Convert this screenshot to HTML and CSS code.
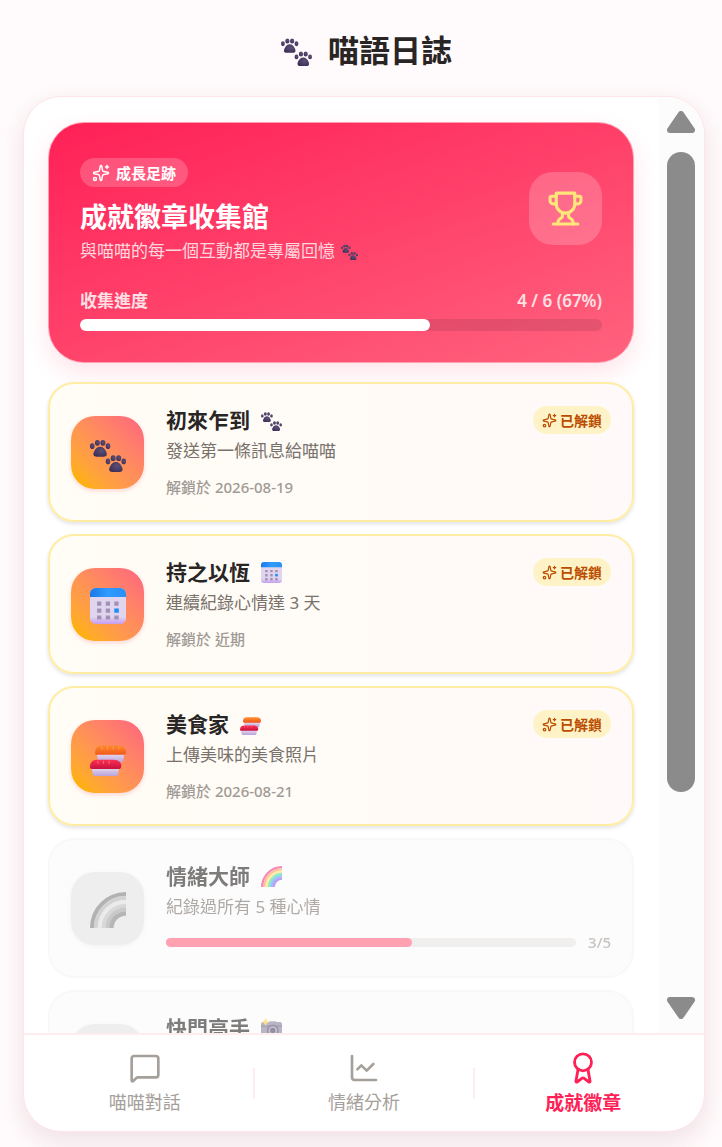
FILE: index.html
```html
<!DOCTYPE html>
<html lang="zh-Hant">
<head>
	<meta charset="utf-8">
	<meta name="viewport" content="width=device-width, initial-scale=1">
	<title>喵語日誌</title>
<link rel="stylesheet" href="styles.css">
</head>
<body>
<svg class="defs" aria-hidden="true">
    <defs>
        <radialGradient id="pawfill" cx="0.6" cy="0.4" r="0.7">
            <stop offset="0" stop-color="#5d5176"/>
            <stop offset="1" stop-color="#3b2c55"/>
        </radialGradient>
        <linearGradient id="caltop" x1="0" y1="0" x2="1" y2="0">
            <stop offset="0" stop-color="#1a78e8"/>
            <stop offset="0.5" stop-color="#2f9bff"/>
            <stop offset="1" stop-color="#2a8ef5"/>
        </linearGradient>
        <linearGradient id="calbody" x1="0" y1="0" x2="0" y2="1">
            <stop offset="0.8" stop-color="#e0d5ee"/>
            <stop offset="1" stop-color="#c79cf0"/>
        </linearGradient>
        <linearGradient id="rice" x1="0" y1="0" x2="0" y2="1">
            <stop offset="0" stop-color="#e6dcee"/>
            <stop offset="1" stop-color="#b9a2dc"/>
        </linearGradient>
        <linearGradient id="salmon" x1="0" y1="0" x2="0" y2="1">
            <stop offset="0" stop-color="#ff8a2a"/>
            <stop offset="1" stop-color="#f2571c"/>
        </linearGradient>
        <linearGradient id="tuna" x1="0" y1="0" x2="0" y2="1">
            <stop offset="0" stop-color="#fb2f52"/>
            <stop offset="1" stop-color="#c9123f"/>
        </linearGradient>
    </defs>
    <symbol id="paw" viewBox="0 0 32 32">
        <g id="onepaw" fill="url(#pawfill)">
            <ellipse cx="2" cy="9" rx="2" ry="2.5"/>
            <ellipse cx="6.6" cy="6.1" rx="2.2" ry="2.6"/>
            <ellipse cx="11.5" cy="6.1" rx="2.2" ry="2.6"/>
            <ellipse cx="16" cy="9" rx="2" ry="2.5"/>
            <path d="M9 9.600c2.600 0 3.800 1.600 4.800 3.200 1.400 2.100 1.400 3.700.7 4.700-.8 1-2.500.9-5.500.9s-4.700.1-5.500-.9c-.7-1-.7-2.600.7-4.700 1-1.600 2.200-3.200 4.800-3.200z"/>
        </g>
        <use href="#onepaw" x="14" y="13.600"/>
    </symbol>
    <symbol id="calendar" viewBox="0 0 32 32">
        <rect width="32" height="32" rx="5" fill="url(#calbody)"/>
        <path d="M0 8V5a5 5 0 0 1 5-5h22a5 5 0 0 1 5 5v3z" fill="url(#caltop)"/>
        <path fill="#a291b5" d="M6.300 12h3.800v3.800H6.300zM14 12h3.800v3.800H14zM21.600 12h3.800v3.800h-3.800zM6.300 18.200h3.800V22H6.300zM14 18.200h3.800V22H14zM6.300 24.400h3.800v3.600H6.300zM14 24.400h3.800v3.600H14zM21.600 24.400h3.800v3.600h-3.800z"/>
        <path fill="#1f8cf5" d="M21.600 18.200h4V22h-4z"/>
    </symbol>
    <symbol id="sushi" viewBox="0 0 32 32">
        <path d="M6 12h24.500l-1 6.500a2 2 0 0 1-2 1.500H9a2 2 0 0 1-2-1.500z" fill="url(#rice)"/>
        <path d="M4.500 11.500C4.500 7 7 5 11 5h14c4.500 0 7 2 7 5.500 0 2-1 2.700-3 2.700H6.500c-1.400 0-2-.5-2-1.700z" fill="url(#salmon)"/>
        <path d="M10.500 6v2.500M15.500 6v2.500M20.500 6v2.500M25.500 6v2.500" stroke="#ff9a50" stroke-width="1" fill="none"/>
        <path d="M1.500 24.500H26L25 30.500a2 2 0 0 1-2 1.500H4.500a2 2 0 0 1-2-1.500z" fill="url(#rice)"/>
        <path d="M0 24c0-4.500 2.500-6.500 6.500-6.500h14c4.500 0 7.300 2 7.300 5.500 0 2-1 2.700-3 2.700H2c-1.400 0-2-.5-2-1.700z" fill="url(#tuna)"/>
        <path d="M7 18.500v2.500M12 18.500v2.500M17 18.500v2.500" stroke="#ff6580" stroke-width="1" fill="none"/>
    </symbol>
    <symbol id="rainbow" viewBox="0 0 32 32">
        <g fill="none">
            <path d="M1.800 32A30.200 30.200 0 0 1 32 1.800" stroke="#f2388f" stroke-width="3.600"/>
            <path d="M5.200 32A26.800 26.800 0 0 1 32 5.200" stroke="#ff9a5c" stroke-width="3.600"/>
            <path d="M8.700 32A23.300 23.300 0 0 1 32 8.700" stroke="#ffe16b" stroke-width="3.800"/>
            <path d="M12.200 32A19.800 19.800 0 0 1 32 12.200" stroke="#4cd9a0" stroke-width="3.600"/>
            <path d="M15.500 32A16.500 16.500 0 0 1 32 15.500" stroke="#4aa5f0" stroke-width="3.400"/>
            <path d="M19 32A13 13 0 0 1 32 19" stroke="#8a5cf0" stroke-width="4"/>
        </g>
    </symbol>
    <symbol id="camera" viewBox="0 0 32 32">
        <path d="M11 8l2-3h10l2 3z" fill="#8d87a0"/>
        <rect y="6" width="32" height="24" rx="3" fill="#8b84a0"/>
        <path d="M0 11h32v3H0z" fill="#736a88"/>
        <circle cx="18" cy="19" r="9" fill="#5a5170"/>
        <circle cx="18" cy="19" r="6.500" fill="#a19bb5"/>
        <circle cx="18" cy="19" r="4" fill="#4b4263"/>
        <path d="M7 0l2 4 4 2-4 2-2 4-2-4-4-2 4-2z" fill="#ffd04a"/>
    </symbol>
    <symbol id="sparkles" viewBox="0 0 24 24">
        <path d="M11.017 2.814a1 1 0 0 1 1.966 0l1.051 5.558a2 2 0 0 0 1.594 1.594l5.558 1.051a1 1 0 0 1 0 1.966l-5.558 1.051a2 2 0 0 0-1.594 1.594l-1.051 5.558a1 1 0 0 1-1.966 0l-1.051-5.558a2 2 0 0 0-1.594-1.594l-5.558-1.051a1 1 0 0 1 0-1.966l5.558-1.051a2 2 0 0 0 1.594-1.594z"/>
        <path d="M20 2v4M22 4h-4"/>
        <circle cx="4" cy="20" r="2"/>
    </symbol>
</svg>

<div class="main">
    <header class="header">
        <svg class="headpaw"><use href="#paw"/></svg>
        <h1 class="heads">喵語日誌</h1>
    </header>

    <div class="phone">
        <div class="content">
            <div class="scroller">
                <section class="hero">
                    <div class="herotop">
                        <div class="herotext">
                            <span class="pill"><svg class="line"><use href="#sparkles"/></svg>成長足跡</span>
                            <h2>成就徽章收集館</h2>
                            <p>與喵喵的每一個互動都是專屬回憶 <svg class="tinypaw"><use href="#paw"/></svg></p>
                        </div>
                        <div class="trophy">
                            <svg class="line" viewBox="0 0 24 24">
                                <path d="M6 9H4a2 2 0 0 1-2-2V5a1 1 0 0 1 1-1h3M18 9h2a2 2 0 0 0 2-2V5a1 1 0 0 0-1-1h-3M4 22h16"/>
                                <path d="M10 14.660V17c0 .55-.47.98-.97 1.210C7.850 18.750 7 20.240 7 22M14 14.660V17c0 .55.47.98.97 1.210C16.150 18.750 17 20.240 17 22"/>
                                <path d="M18 2H6v7a6 6 0 0 0 12 0V2z"/>
                            </svg>
                        </div>
                    </div>
                    <div class="herocount"><span>收集進度</span><span>4 / 6 (67%)</span></div>
                    <div class="herobar"><div class="fill" style="width: 67%"></div></div>
                </section>

                <div class="cards">
                    <article class="card">
                        <div class="tile"><svg><use href="#paw"/></svg></div>
                        <div class="info">
                            <div class="row">
                                <h3>初來乍到 <svg><use href="#paw"/></svg></h3>
                                <span class="badge"><svg class="line"><use href="#sparkles"/></svg>已解鎖</span>
                            </div>
                            <p class="desc">發送第一條訊息給喵喵</p>
                            <p class="date">解鎖於 2026-08-19</p>
                        </div>
                    </article>

                    <article class="card">
                        <div class="tile"><svg><use href="#calendar"/></svg></div>
                        <div class="info">
                            <div class="row">
                                <h3>持之以恆 <svg><use href="#calendar"/></svg></h3>
                                <span class="badge"><svg class="line"><use href="#sparkles"/></svg>已解鎖</span>
                            </div>
                            <p class="desc">連續紀錄心情達 3 天</p>
                            <p class="date">解鎖於 近期</p>
                        </div>
                    </article>

                    <article class="card">
                        <div class="tile"><svg><use href="#sushi"/></svg></div>
                        <div class="info">
                            <div class="row">
                                <h3>美食家 <svg><use href="#sushi"/></svg></h3>
                                <span class="badge"><svg class="line"><use href="#sparkles"/></svg>已解鎖</span>
                            </div>
                            <p class="desc">上傳美味的美食照片</p>
                            <p class="date">解鎖於 2026-08-21</p>
                        </div>
                    </article>

                    <article class="card locked">
                        <div class="tile"><svg><use href="#rainbow"/></svg></div>
                        <div class="info">
                            <div class="row">
                                <h3>情緒大師 <svg><use href="#rainbow"/></svg></h3>
                            </div>
                            <p class="desc">紀錄過所有 5 種心情</p>
                            <div class="progress">
                                <div class="bar"><div class="fill" style="width: 60%"></div></div>
                                <span>3/5</span>
                            </div>
                        </div>
                    </article>

                    <article class="card locked">
                        <div class="tile"><svg><use href="#camera"/></svg></div>
                        <div class="info">
                            <div class="row">
                                <h3>快門高手 <svg><use href="#camera"/></svg></h3>
                            </div>
                        </div>
                    </article>
                </div>
            </div>

            <div class="scrollbar" aria-hidden="true">
                <svg viewBox="0 0 28 22"><path d="M14 3L25 19H3z"/></svg>
                <div class="track"><div class="thumb"></div></div>
                <svg viewBox="0 0 28 22"><path d="M14 19L25 3H3z"/></svg>
            </div>
        </div>

        <nav class="tabs">
            <button type="button">
                <svg class="line" viewBox="0 0 24 24"><path d="M22 17a2 2 0 0 1-2 2H6.828a2 2 0 0 0-1.414.586l-2.202 2.202A.71.71 0 0 1 2 21.286V5a2 2 0 0 1 2-2h16a2 2 0 0 1 2 2z"/></svg>
                喵喵對話
            </button>
            <div class="divider"></div>
            <button type="button">
                <svg class="line" viewBox="0 0 24 24"><path d="M3 3v16a2 2 0 0 0 2 2h16M19 9l-5 5-4-4-3 3"/></svg>
                情緒分析
            </button>
            <div class="divider"></div>
            <button type="button" class="active">
                <svg class="line" viewBox="0 0 24 24"><path d="m15.477 12.890 1.515 8.526a.5.5 0 0 1-.81.47l-3.580-2.687a1 1 0 0 0-1.197 0l-3.586 2.686a.5.5 0 0 1-.81-.469l1.514-8.526"/><circle cx="12" cy="8" r="6"/></svg>
                成就徽章
            </button>
        </nav>
    </div>
</div>
</body>
</html>
```
FILE: styles.css
```css
*{
    box-sizing: border-box;
}
body {
    margin: 0;
    font-family: "Noto Sans", "Noto Sans CJK TC", sans-serif;
    background: #fffafb;
    color: #292524;
}
h1, h2, h3, p{
    margin: 0;
}
svg{
    display: block;
    flex-shrink: 0;
}
.defs{
    position: absolute;
    width: 0;
    height: 0;
}
.line{
    fill: none;
    stroke: currentColor;
    stroke-width: 2;
    stroke-linecap: round;
    stroke-linejoin: round;
}
.main{
    display: flex;
    flex-direction: column;
    height: 100vh;
    padding: 0 17px 15px 23px;
}
.header{
    display: flex;
    justify-content: center;
    align-items: center;
    gap: 16px;
    height: 96px;
    padding-top: 4px;
    padding-left: 5px;
    flex-shrink: 0;
}
.headpaw{
    width: 31px;
    height: 31px;
}
.heads{
    font-size: 31px;
    line-height: 40px;
}

/* white frame */
.phone{
    display: flex;
    flex-direction: column;
    flex: 1;
    min-height: 0;
    overflow: hidden;
    background: #fff;
    border: 1px solid #ffe4e8;
    border-radius: 38px;
    box-shadow: 0 12px 24px rgba(110, 30, 60, 0.08), 0 4px 30px rgba(120, 40, 70, 0.03);
}
.content{
    display: flex;
    flex: 1;
    min-height: 0;
}
.scroller{
    flex: 1;
    min-width: 0;
    padding: 25px 24px;
    overflow-y: auto;
    scrollbar-width: none;
}

/* hero */
.hero{
    padding: 31px;
    border: 1px solid #ff9fb0;
    border-radius: 36px;
    background: linear-gradient(160deg, #ff2056, #ff637e);
    background-origin: border-box;
    color: #fff;
    box-shadow: 0 10px 24px rgba(255, 32, 86, 0.12);
}
.herotop{
    display: flex;
    justify-content: space-between;
    align-items: center;
}
.pill{
    display: inline-flex;
    align-items: center;
    gap: 6px;
    height: 29px;
    margin: 4px 0 13px;
    padding: 0 12px;
    border-radius: 15px;
    background: rgba(255, 255, 255, 0.2);
    font-size: 15px;
    font-weight: 600;
    vertical-align: top;
}
.pill svg{
    width: 18px;
    height: 18px;
}
.hero h2{
    font-size: 27px;
    line-height: 34px;
}
.hero p{
    display: flex;
    align-items: center;
    gap: 6px;
    margin-top: 5px;
    font-size: 17px;
    line-height: 24px;
    color: #ffd6dd;
}
.tinypaw{
    width: 17px;
    height: 17px;
}
.trophy{
    display: flex;
    justify-content: center;
    align-items: center;
    width: 73px;
    height: 73px;
    border-radius: 24px;
    background: rgba(255, 255, 255, 0.2);
    color: #ffe67a;
}
.trophy svg{
    width: 37px;
    height: 37px;
}
.herocount{
    display: flex;
    justify-content: space-between;
    margin-top: 26px;
    font-size: 17px;
    font-weight: 600;
    line-height: 24px;
    color: #ffe0e5;
}
.herobar{
    height: 12px;
    margin-top: 6px;
    border-radius: 6px;
    background: rgba(120, 50, 70, 0.2);
}
.fill{
    height: 100%;
    border-radius: 6px;
    background: #fff;
}

/* badge cards */
.cards{
    display: grid;
    gap: 12px;
    margin-top: 19px;
}
.card{
    display: flex;
    align-items: center;
    gap: 22px;
    min-height: 140px;
    padding: 22px 21px;
    border: 2px solid #ffeda6;
    border-radius: 26px;
    background: linear-gradient(to right, #fffdf5, #fff9f9);
    box-shadow: 0 2px 4px rgba(0, 0, 0, 0.12);
}
.tile{
    display: flex;
    justify-content: center;
    align-items: center;
    flex-shrink: 0;
    width: 73px;
    height: 73px;
    padding-top: 3px;
    border-radius: 24px;
    background: linear-gradient(to top right in oklab, #ffb000 10%, #ff637e);
    box-shadow: 0 2px 4px rgba(255, 60, 90, 0.2);
}
.tile svg{
    width: 36px;
    height: 36px;
}
.info{
    flex: 1;
    align-self: flex-start;
    min-width: 0;
}
.row{
    display: flex;
    justify-content: space-between;
    align-items: center;
}
.row h3{
    display: flex;
    align-items: center;
    gap: 11px;
    font-size: 21px;
    line-height: 28px;
}
.row h3 svg{
    width: 21px;
    height: 21px;
}
.badge{
    display: flex;
    align-items: center;
    gap: 3px;
    height: 28px;
    padding: 0 9px;
    border-radius: 14px;
    background: #fef3c6;
    color: #bb4d00;
    font-size: 14px;
    font-weight: 600;
}
.badge svg{
    width: 15px;
    height: 15px;
}
.desc{
    margin-top: 5px;
    font-size: 17px;
    line-height: 24px;
    color: #79716b;
}
.date{
    margin-top: 13px;
    font-size: 15px;
    font-weight: 500;
    line-height: 22px;
    color: #a09a95;
}
.locked{
    border-color: #f5f5f4;
    background: #fbfbfb;
    box-shadow: none;
    opacity: 0.6;
}
.locked .tile{
    background: #e4e4e4;
    box-shadow: 0 1px 4px rgba(0, 0, 0, 0.08);
}
.locked .tile svg{
    filter: grayscale(1);
    opacity: 0.8;
}
.progress{
    display: flex;
    align-items: center;
    gap: 12px;
    margin-top: 12px;
    font-size: 15px;
    font-weight: 500;
    line-height: 22px;
    color: #a09a95;
}
.bar{
    flex: 1;
    height: 9px;
    border-radius: 5px;
    background: #e7e5e4;
}
.bar .fill{
    background: #ff637e;
}

/* scrollbar */
.scrollbar{
    display: flex;
    flex-direction: column;
    align-items: center;
    flex-shrink: 0;
    width: 46px;
    padding: 14px 0;
    background: #fcfcfc;
}
.scrollbar svg{
    width: 28px;
    height: 22px;
    fill: #8b8b8b;
    stroke: #8b8b8b;
    stroke-width: 6;
    stroke-linejoin: round;
}
.track{
    flex: 1;
    width: 28px;
    margin: 19px 0;
}
.thumb{
    height: 77.5%;
    border-radius: 14px;
    background: #8b8b8b;
}

/* bottom tabs */
.tabs{
    display: flex;
    align-items: center;
    flex-shrink: 0;
    height: 98px;
    padding: 0 12px;
    border-top: 2px solid #ffecee;
}
.tabs button{
    display: flex;
    flex-direction: column;
    align-items: center;
    flex: 1;
    gap: 5px;
    padding: 0;
    border: none;
    background: none;
    font-family: inherit;
    font-size: 18px;
    line-height: 26px;
    color: #a6a09b;
    cursor: pointer;
}
.tabs svg{
    width: 32px;
    height: 32px;
}
.tabs .active{
    font-size: 19px;
    font-weight: 600;
    color: #ff2056;
}
.tabs .active svg{
    width: 34px;
    height: 34px;
}
.divider{
    width: 2px;
    height: 31px;
    background: #ffecee;
}
```
